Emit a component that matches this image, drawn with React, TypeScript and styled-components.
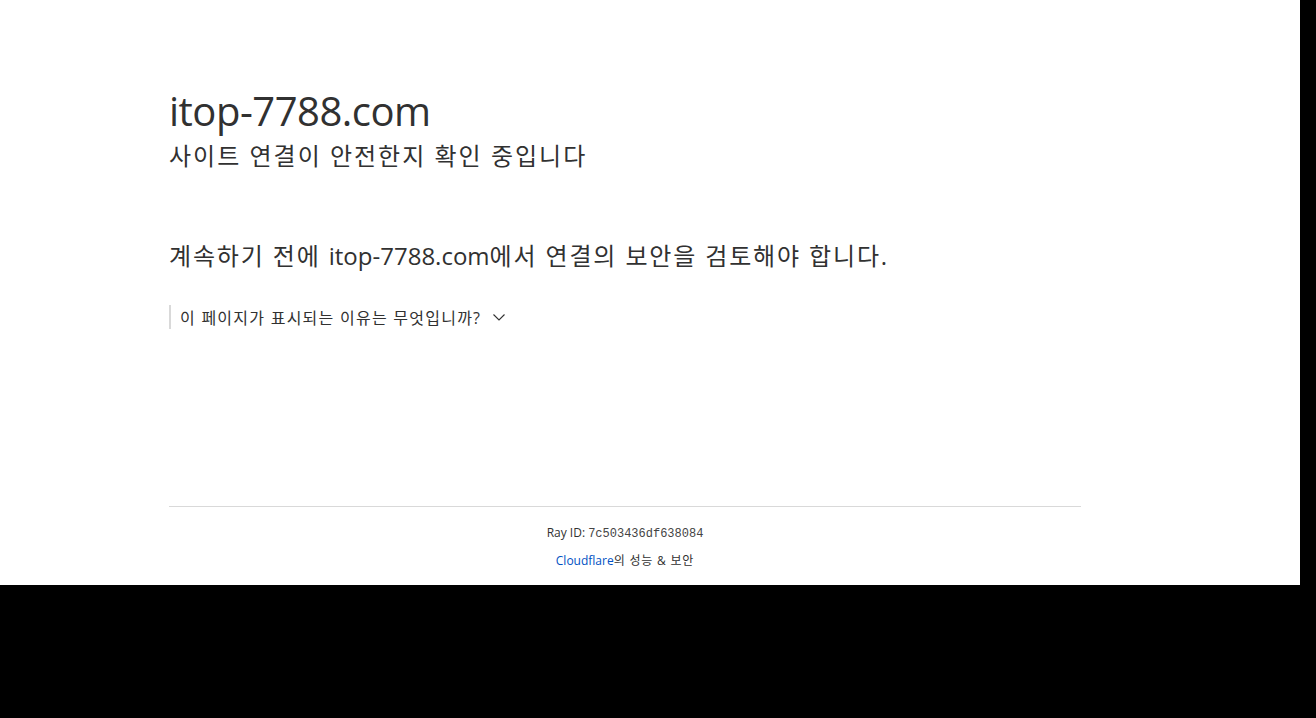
import React from "react";
import styled, { createGlobalStyle } from "styled-components";

const Global = createGlobalStyle`
  html, body { margin: 0; padding: 0; background: #000; }
  #root { width: 1316px; height: 718px; background: #000; }
`;

const Page = styled.div`
  width: 1300px;
  height: 585px;
  background: #fff;
  color: #313131;
  font-family: "Open Sans", "Noto Sans CJK KR", sans-serif;
  display: flex;
  flex-direction: column;
`;

const Main = styled.main`
  width: 912px;
  margin-left: 169px;
  padding-top: 81px;
  flex: 1;
`;

const Title = styled.h1`
  margin: 0;
  font-size: 40px;
  line-height: 60px;
  font-weight: 400;
  letter-spacing: -0.5px;
`;

const Subtitle = styled.h2`
  margin: -3px 0 0;
  font-size: 24px;
  line-height: 36px;
  font-weight: 400;
`;

const Lead = styled.p`
  margin: 64px 0 0;
  font-size: 24px;
  line-height: 36px;
  font-weight: 400;
`;

const Ko = styled.span<{ $ls: number }>`
  letter-spacing: ${(p) => p.$ls}px;
`;

const Why = styled.div`
  margin-top: 31px;
  display: flex;
  align-items: center;
  gap: 11px;
  border-left: 2px solid #d9d9d9;
  padding-left: 9px;
  height: 24px;
  font-size: 16px;
`;

const Footer = styled.footer`
  width: 912px;
  margin-left: 169px;
  border-top: 1px solid #d9d9d9;
  padding: 16px 0 15px;
  display: flex;
  flex-direction: column;
  align-items: center;
  gap: 7px;
  font-size: 12px;
  line-height: 19px;
`;

const Mono = styled.code`
  font-family: "Liberation Mono", monospace;
  font-size: 12px;
  color: #444;
`;

const Link = styled.a`
  color: #0051c3;
  text-decoration: none;
`;

export default function App() {
  return (
    <>
      <Global />
      <Page>
        <Main>
          <Title>itop-7788.com</Title>
          <Subtitle>
            <Ko $ls={2}>사이트 연결이 안전한지 확인 중입니다</Ko>
          </Subtitle>
          <Lead>
            <Ko $ls={1.85}>계속하기 전에 </Ko>itop-7788.com
            <Ko $ls={1.85}>에서 연결의 보안을 검토해야 합니다.</Ko>
          </Lead>
          <Why>
            <Ko $ls={1.25}>이 페이지가 표시되는 이유는 무엇입니까?</Ko>
            <svg width="14" height="14" viewBox="0 0 14 14" fill="none" stroke="#313131" strokeWidth="1.1">
              <path d="M1.5 4.5l5.5 5.5 5.5-5.5" />
            </svg>
          </Why>
        </Main>
        <Footer>
          <div>
            Ray ID: <Mono>7c503436df638084</Mono>
          </div>
          <div>
            <Link href="#">Cloudflare</Link>
            <Ko $ls={0.8}>의 성능 &amp; 보안</Ko>
          </div>
        </Footer>
      </Page>
    </>
  );
}
